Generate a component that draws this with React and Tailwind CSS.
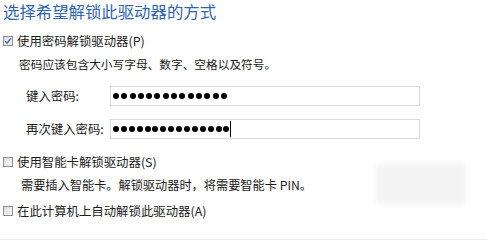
import React from "react";

const font = { fontFamily: '"Noto Sans CJK SC", "Noto Sans", sans-serif' };

function Box({ checked }) {
  return (
    <span className="relative inline-flex h-[10px] w-[10px] shrink-0 items-center justify-center border border-[#8e8f8f] bg-gradient-to-br from-[#dcdcdc] to-[#f8f8f8]">
      {checked && (
        <svg width="8" height="8" viewBox="0 0 8 8" className="absolute">
          <path d="M1.2 4.2 L3.1 6.2 L6.8 1.4" fill="none" stroke="#3c6fb5" strokeWidth="1.5" />
        </svg>
      )}
    </span>
  );
}

function Dots({ n, gap }) {
  return (
    <div className={`flex items-center ${gap}`}>
      {Array.from({ length: n }).map((_, i) => (
        <span key={i} className="h-[6px] w-[6px] rounded-full bg-black" />
      ))}
    </div>
  );
}

export default function App() {
  return (
    <div className="relative h-[240px] w-[487px] overflow-hidden bg-white text-[#1a1a1a]" style={font}>
      <div className="flex flex-col">
        <div className="whitespace-nowrap pl-[3px] text-[16.4px] leading-[22px] text-[#2f64b4]">选择希望解锁此驱动器的方式</div>

        <div className="mt-[11px] flex h-[16px] items-center gap-[4px] pl-[3px] text-[12.4px] leading-[16px]">
          <Box checked />
          <span>使用密码解锁驱动器(P)</span>
        </div>

        <div className="mt-[7px] h-[16px] whitespace-nowrap pl-[19px] text-[11.7px] leading-[16px]">密码应该包含大小写字母、数字、空格以及符号。</div>

        <div className="mt-[14px] flex h-[20px] items-center">
          <span className="w-[110px] shrink-0 whitespace-nowrap pl-[26px] text-[12.4px]">键入密码:</span>
          <div className="flex h-[20px] w-[310px] items-center border border-[#d9d9d9] pl-[2px]">
            <Dots n={14} gap="gap-[2.3px]" />
          </div>
        </div>

        <div className="mt-[13px] flex h-[20px] items-center">
          <span className="w-[110px] shrink-0 whitespace-nowrap pl-[26px] text-[12.4px]">再次键入密码:</span>
          <div className="flex h-[20px] w-[310px] items-center border border-[#d9d9d9] pl-[2px]">
            <Dots n={15} gap="gap-[1.9px]" />
            <span className="ml-[1px] h-[16px] w-[1px] bg-black" />
          </div>
        </div>

        <div className="mt-[15px] flex h-[16px] items-center gap-[4px] pl-[3px] text-[12.4px] leading-[16px]">
          <Box />
          <span>使用智能卡解锁驱动器(S)</span>
        </div>

        <div className="mt-[7px] h-[16px] whitespace-nowrap pl-[21px] text-[12.2px] leading-[16px]">需要插入智能卡。解锁驱动器时，将需要智能卡 PIN。</div>

        <div className="mt-[10px] flex h-[16px] items-center gap-[4px] pl-[3px] text-[12.4px] leading-[16px]">
          <Box />
          <span>在此计算机上自动解锁此驱动器(A)</span>
        </div>
      </div>

      <div className="absolute left-[376px] top-[164px] h-[40px] w-[90px] bg-[#f4f4f4] blur-[2px]" />
      <div className="absolute bottom-0 left-0 h-[1px] w-full bg-[#ececec]" />
    </div>
  );
}
